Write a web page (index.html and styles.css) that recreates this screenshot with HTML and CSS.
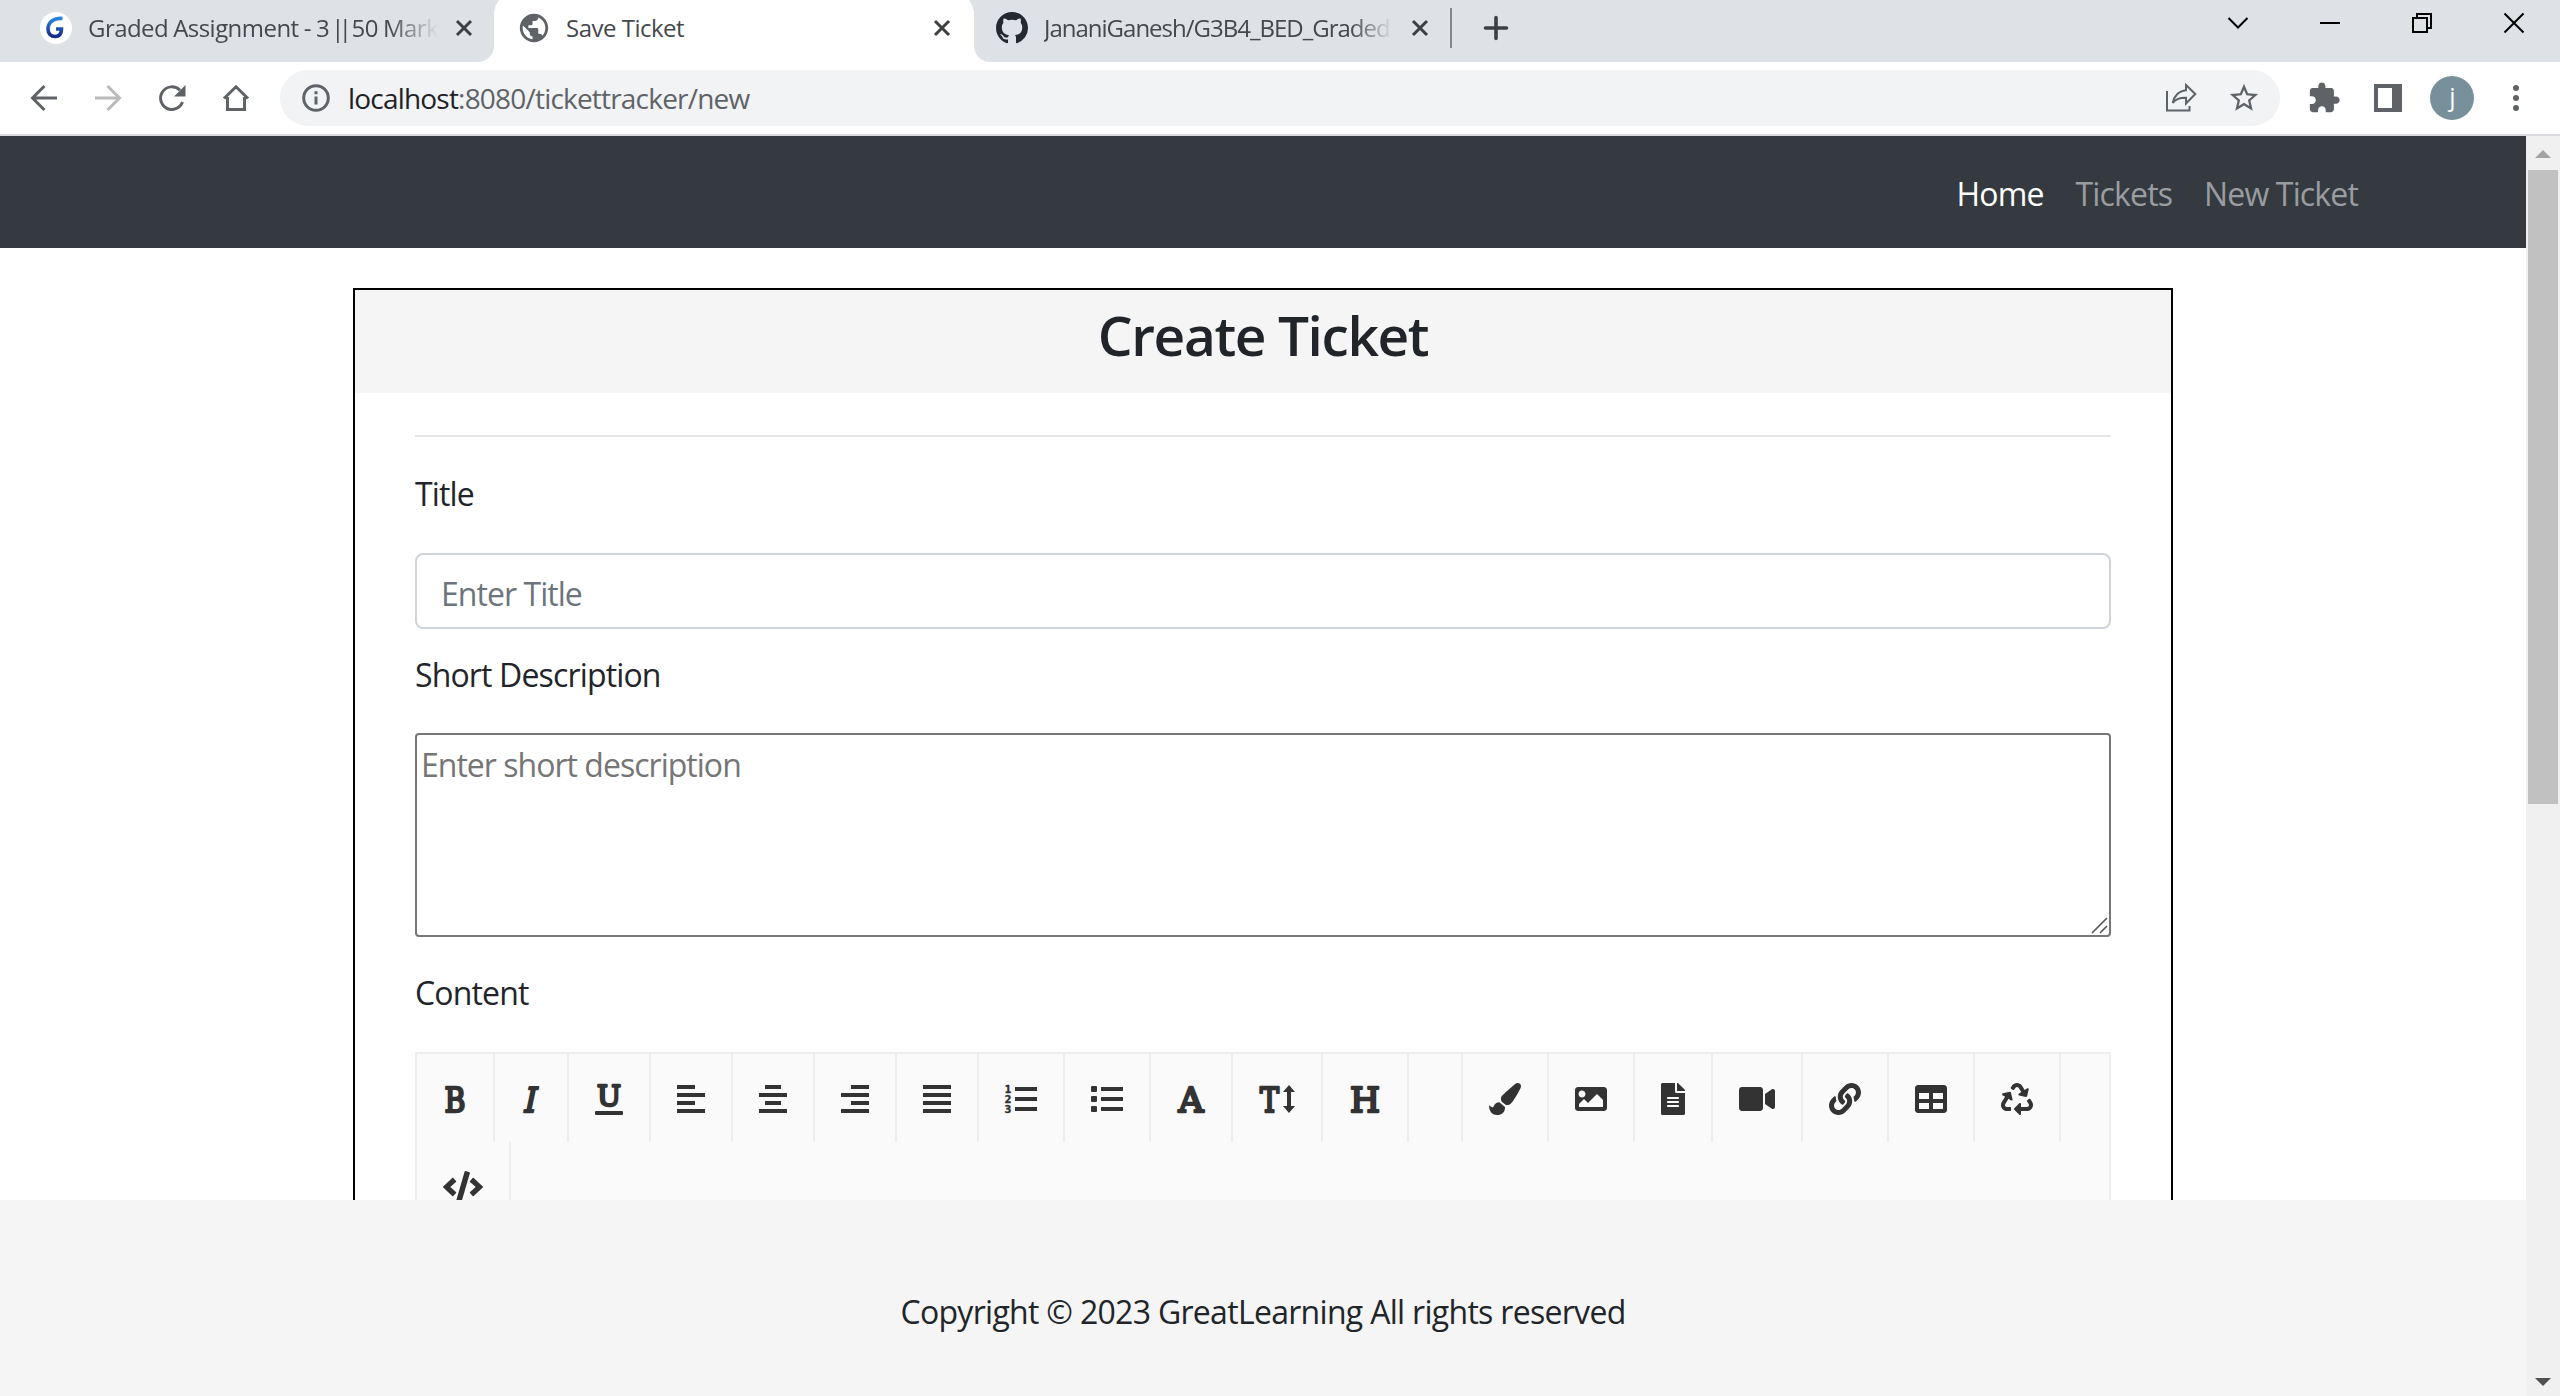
FILE: index.html
```html
<!DOCTYPE html>
<html lang="en">
<head>
<meta charset="utf-8">
<title>Save Ticket</title>
<link rel="stylesheet" href="styles.css">
</head>
<body>
<header class="tabs">
  <div class="tab tab-first">
    <svg class="fav-g" width="32" height="32" viewBox="0 0 32 32"><defs><linearGradient id="gl" x1="0" y1="0" x2="0" y2="1"><stop offset="0" stop-color="#2a86dc"/><stop offset="1" stop-color="#16298c"/></linearGradient></defs><circle cx="16" cy="16" r="16" fill="#fff"/><path d="M22.500 6.500C14 5.500 8 10 8 17c0 4.500 3 7.500 7 7.500 4.500 0 6.500-3 6.500-7.500H16" fill="none" stroke="url(#gl)" stroke-width="3.600"/></svg>
    <span class="tab-title t1">Graded Assignment - 3 <span class="bars">||</span> 50 Mark</span>
    <svg class="x" width="18" height="18" viewBox="0 0 18 18"><path d="M2 2l14 14M16 2L2 16"/></svg>
  </div>
  <div class="tab tab-active">
    <svg class="globe" width="34" height="34" viewBox="0 0 24 24"><path d="M12 2C6.480 2 2 6.480 2 12s4.480 10 10 10 10-4.480 10-10S17.520 2 12 2zm-1 17.930c-3.950-.49-7-3.850-7-7.930 0-.62.08-1.210.21-1.790L9 15v1c0 1.100.9 2 2 2v1.930zm6.900-2.540c-.26-.81-1-1.390-1.900-1.390h-1v-3c0-.55-.45-1-1-1H8v-2h2c.55 0 1-.45 1-1V7h2c1.100 0 2-.9 2-2v-.41c2.930 1.190 5 4.060 5 7.410 0 2.080-.8 3.970-2.100 5.390z"/></svg>
    <span class="tab-title t2">Save Ticket</span>
    <svg class="x" width="18" height="18" viewBox="0 0 18 18"><path d="M2 2l14 14M16 2L2 16"/></svg>
  </div>
  <div class="tab tab-last">
    <svg class="octo" width="32" height="32" viewBox="0 0 16 16"><path d="M8 0C3.580 0 0 3.580 0 8c0 3.540 2.290 6.530 5.470 7.590.4.07.55-.17.55-.38 0-.19-.01-.82-.01-1.490-2.010.37-2.530-.49-2.690-.94-.09-.23-.48-.94-.82-1.130-.28-.15-.68-.52-.01-.53.63-.01 1.080.58 1.230.82.72 1.210 1.870.87 2.330.66.07-.52.28-.87.51-1.070-1.780-.2-3.640-.89-3.640-3.950 0-.87.31-1.590.82-2.150-.08-.2-.36-1.020.08-2.120 0 0 .67-.21 2.200.82.64-.18 1.320-.27 2-.27s1.360.09 2 .27c1.530-1.040 2.200-.82 2.200-.82.44 1.100.16 1.920.08 2.120.51.56.82 1.270.82 2.150 0 3.070-1.870 3.750-3.650 3.950.29.25.54.73.54 1.480 0 1.070-.01 1.930-.01 2.200 0 .21.15.46.55.38A8.010 8.010 0 0 0 16 8c0-4.420-3.580-8-8-8z"/></svg>
    <span class="tab-title t3">JananiGanesh/G3B4_BED_Graded</span>
    <svg class="x" width="18" height="18" viewBox="0 0 18 18"><path d="M2 2l14 14M16 2L2 16"/></svg>
    <i class="tab-sep"></i>
    <svg class="plus" width="24" height="24" viewBox="0 0 24 24"><path d="M12 1.500v21M1.500 12h21"/></svg>
    <div class="win">
      <svg width="20" height="20" viewBox="0 0 20 20"><path d="M.5 5l9.500 9.500L19.500 5"/></svg>
      <svg width="20" height="20" viewBox="0 0 20 20"><path d="M0 10h20"/></svg>
      <svg width="20" height="20" viewBox="0 0 20 20"><path d="M1 5h14v14H1zM5 5V1h14v14h-4"/></svg>
      <svg width="20" height="20" viewBox="0 0 20 20"><path d="M.5.5l19 19M19.500.5l-19 19"/></svg>
    </div>
  </div>
</header>
<div class="toolbar">
  <div class="nav-icons">
    <svg width="28" height="28" viewBox="0 0 28 28"><path d="M27 14H3M14.500 2L2.500 14l12 12"/></svg>
    <svg class="off" width="28" height="28" viewBox="0 0 28 28"><path d="M1 14h24M13.500 2l12 12-12 12"/></svg>
    <svg width="28" height="28" viewBox="0 0 28 28"><path d="M24.500 18A11.300 11.300 0 1 1 22 6.300"/><path class="solid" d="M27.500 1v11.500H16z"/></svg>
    <svg width="28" height="28" viewBox="0 0 28 28"><path d="M5.500 13v12.500h17V13M2 14.500L14 2.800l12 11.700"/></svg>
  </div>
  <div class="omnibox">
    <svg class="info" width="28" height="28" viewBox="0 0 28 28"><circle cx="14" cy="14" r="12.300"/><path d="M14 12.500v8M14 7.300v3"/></svg>
    <span class="url"><b>localhost</b>:8080/tickettracker/new</span>
    <svg class="share" width="32" height="30" viewBox="0 0 32 30"><path d="M2 8v19.500h22.500V23"/><path d="M21 2l9.300 9L21 20.500v-5.800c-6.500-.2-10.500 1.300-13.300 5.300C8.800 13.500 13.500 8 21 7.300z"/></svg>
    <svg class="star" width="34" height="34" viewBox="0 0 24 24"><path d="M22 9.240l-7.190-.62L12 2 9.190 8.630 2 9.240l5.460 4.730L5.820 21 12 17.270 18.180 21l-1.630-7.030L22 9.240zM12 15.400l-3.760 2.270 1-4.280-3.320-2.880 4.380-.38L12 6.100l1.710 4.040 4.380.38-3.320 2.880 1 4.280L12 15.400z"/></svg>
  </div>
  <svg class="puzzle" width="34" height="34" viewBox="0 0 24 24"><path d="M20.500 11H19V7c0-1.100-.9-2-2-2h-4V3.500C13 2.120 11.880 1 10.500 1S8 2.120 8 3.500V5H4c-1.100 0-1.990.9-1.990 2v3.800H3.500c1.490 0 2.700 1.210 2.700 2.700s-1.210 2.700-2.700 2.700H2V20c0 1.100.9 2 2 2h3.800v-1.500c0-1.490 1.210-2.700 2.700-2.700 1.490 0 2.700 1.210 2.700 2.700V22H17c1.100 0 2-.9 2-2v-4h1.500c1.380 0 2.500-1.120 2.500-2.500S21.880 11 20.500 11z"/></svg>
  <i class="panel"></i>
  <span class="avatar">j</span>
  <svg class="dots" width="6" height="26" viewBox="0 0 6 26"><circle cx="3" cy="3" r="3"/><circle cx="3" cy="13" r="3"/><circle cx="3" cy="23" r="3"/></svg>
</div>
<div class="viewport">
  <div class="page">
    <nav class="navbar"><a class="current">Home</a><a>Tickets</a><a>New Ticket</a></nav>
    <main class="main">
      <section class="card">
        <h1 class="card-title">Create Ticket</h1>
        <form class="form">
          <hr class="rule">
          <label class="label">Title</label>
          <input class="field" placeholder="Enter Title">
          <label class="label label-2">Short Description</label>
          <div class="area-wrap"><textarea class="area" placeholder="Enter short description"></textarea><svg class="grip" width="17" height="17" viewBox="0 0 17 17"><path d="M1 16L16 1M9 16l7-7"/></svg></div>
          <label class="label label-3">Content</label>
          <div class="editor">
            <a><svg width="24" height="32"><text x="1.500" y="28.500" textLength="21" lengthAdjust="spacingAndGlyphs">B</text></svg></a>
            <a><svg width="20" height="32"><text transform="translate(1.500 28.500) skewX(-12)" textLength="12" lengthAdjust="spacingAndGlyphs">I</text></svg></a>
            <a><svg width="28" height="32"><text class="u" x="2" y="22.500" textLength="24" lengthAdjust="spacingAndGlyphs">U</text><rect y="28" width="28" height="4" rx="1"/></svg></a>
            <a><svg width="28" height="32"><path d="M0 2h18v4H0zM0 10h28v4H0zM0 18h18v4H0zM0 26h28v4H0z"/></svg></a>
            <a><svg width="28" height="32"><path d="M6 2h16v4H6zM0 10h28v4H0zM6 18h16v4H6zM0 26h28v4H0z"/></svg></a>
            <a><svg width="28" height="32"><path d="M10 2h18v4H10zM0 10h28v4H0zM10 18h18v4H10zM0 26h28v4H0z"/></svg></a>
            <a><svg width="28" height="32"><path d="M0 2h28v4H0zM0 10h28v4H0zM0 18h28v4H0zM0 26h28v4H0z"/></svg></a>
            <a><svg width="32" height="32"><path d="M10 4h22v4H10zM10 14h22v4H10zM10 24h22v4H10z"/><text class="num" x="-.5" y="10">1</text><text class="num" x="-.5" y="20">2</text><text class="num" x="-.5" y="30">3</text></svg></a>
            <a><svg width="32" height="32"><path d="M10 4h22v4H10zM10 14h22v4H10zM10 24h22v4H10z"/><rect y="3" width="6" height="6" rx="1"/><rect y="13" width="6" height="6" rx="1"/><rect y="23" width="6" height="6" rx="1"/></svg></a>
            <a><svg width="28" height="32"><text x="1.500" y="28.500" textLength="25" lengthAdjust="spacingAndGlyphs">A</text></svg></a>
            <a><svg width="36" height="32"><text x="1" y="28.500" textLength="19" lengthAdjust="spacingAndGlyphs">T</text><path d="M30 2l6 7h-4v14h4l-6 7-6-7h4V9h-4z"/></svg></a>
            <a><svg width="32" height="32"><text x="1" y="28.500" textLength="30" lengthAdjust="spacingAndGlyphs">H</text></svg></a>
            <a></a>
            <a><svg width="32" height="32" viewBox="0 0 512 512"><path d="M167.020 309.340c-40.120 2.580-76.530 17.860-97.190 72.300-2.350 6.210-8 9.980-14.590 9.980-11.110 0-45.460-27.670-55.250-34.350C0 439.620 37.930 512 128 512c75.860 0 128-43.770 128-120.190 0-3.110-.65-6.080-.97-9.130l-88.010-73.340zM457.890 0c-15.160 0-29.370 6.710-40.210 16.450C213.270 199.050 192 203.340 192 257.090c0 13.700 3.250 26.760 8.730 38.700l63.820 53.180c7.210 1.800 14.640 3.030 22.390 3.030 62.110 0 98.110-45.470 211.160-256.460 7.380-14.350 13.900-29.850 13.900-45.990C512 20.640 486 0 457.890 0z"/></svg></a>
            <a><svg width="32" height="32" viewBox="0 0 512 512"><path d="M464 448H48c-26.510 0-48-21.490-48-48V112c0-26.510 21.490-48 48-48h416c26.510 0 48 21.490 48 48v288c0 26.510-21.490 48-48 48zM112 120c-30.928 0-56 25.072-56 56s25.072 56 56 56 56-25.072 56-56-25.072-56-56-56zM64 384h384V272l-87.515-87.515c-4.686-4.686-12.284-4.686-16.971 0L208 320l-55.515-55.515c-4.686-4.686-12.284-4.686-16.971 0L64 336v48z"/></svg></a>
            <a><svg width="24" height="32" viewBox="0 0 384 512"><path d="M224 136V0H24C10.700 0 0 10.700 0 24v464c0 13.300 10.700 24 24 24h336c13.300 0 24-10.700 24-24V160H248c-13.200 0-24-10.800-24-24zm64 236c0 6.600-5.400 12-12 12H108c-6.600 0-12-5.400-12-12v-8c0-6.600 5.400-12 12-12h168c6.600 0 12 5.400 12 12v8zm0-64c0 6.600-5.400 12-12 12H108c-6.600 0-12-5.400-12-12v-8c0-6.600 5.400-12 12-12h168c6.600 0 12 5.400 12 12v8zm0-72v8c0 6.600-5.400 12-12 12H108c-6.600 0-12-5.400-12-12v-8c0-6.600 5.400-12 12-12h168c6.600 0 12 5.400 12 12zm96-114.100v6.100H256V0h6.100c6.400 0 12.500 2.500 17 7l97.900 98c4.500 4.500 7 10.600 7 16.900z"/></svg></a>
            <a><svg width="36" height="32" viewBox="0 0 576 512"><path d="M336.200 64H47.800C21.400 64 0 85.400 0 111.800v288.400C0 426.600 21.400 448 47.800 448h288.400c26.400 0 47.800-21.400 47.800-47.800V111.800c0-26.400-21.400-47.800-47.800-47.800zm189.400 37.700L416 177.300v157.400l109.600 75.500c21.200 14.600 50.400-.3 50.400-25.800V127.500c0-25.400-29.100-40.400-50.400-25.800z"/></svg></a>
            <a><svg width="32" height="32" viewBox="0 0 512 512"><path d="M326.612 185.391c59.747 59.809 58.927 155.698.36 214.590-.11.12-.24.25-.36.37l-67.200 67.200c-59.270 59.270-155.699 59.262-214.960 0-59.270-59.260-59.270-155.700 0-214.960l37.106-37.106c9.840-9.840 26.786-3.300 27.294 10.606.648 17.722 3.826 35.527 9.690 52.721 1.986 5.822.567 12.262-3.783 16.612l-13.087 13.087c-28.026 28.026-28.905 73.660-1.155 101.960 28.024 28.579 74.086 28.749 102.325.51l67.200-67.190c28.191-28.191 28.073-73.757 0-101.830-3.701-3.694-7.429-6.564-10.341-8.569a16.037 16.037 0 0 1-6.947-12.606c-.396-10.567 3.348-21.456 11.698-29.806l21.054-21.055c5.521-5.521 14.182-6.199 20.584-1.731a152.482 152.482 0 0 1 20.522 17.197zM467.547 44.449c-59.261-59.262-155.690-59.270-214.960 0l-67.200 67.200c-.12.12-.25.25-.36.37-58.566 58.892-59.387 154.781.36 214.590a152.454 152.454 0 0 0 20.521 17.196c6.402 4.468 15.064 3.789 20.584-1.731l21.054-21.055c8.350-8.350 12.094-19.239 11.698-29.806a16.037 16.037 0 0 0-6.947-12.606c-2.912-2.005-6.640-4.875-10.341-8.569-28.073-28.073-28.191-73.639 0-101.830l67.200-67.190c28.239-28.239 74.300-28.069 102.325.51 27.750 28.300 26.872 73.934-1.155 101.960l-13.087 13.087c-4.350 4.350-5.769 10.790-3.783 16.612 5.864 17.194 9.042 34.999 9.690 52.721.509 13.906 17.454 20.446 27.294 10.606l37.106-37.106c59.271-59.259 59.271-155.699.001-214.959z"/></svg></a>
            <a><svg width="32" height="32" viewBox="0 0 512 512"><path d="M464 32H48C21.490 32 0 53.490 0 80v352c0 26.510 21.490 48 48 48h416c26.510 0 48-21.490 48-48V80c0-26.510-21.490-48-48-48zM224 416H64v-96h160v96zm0-160H64v-96h160v96zm224 160H288v-96h160v96zm0-160H288v-96h160v96z"/></svg></a>
            <a><svg width="32" height="32" viewBox="0 0 512 512"><path d="M184.561 261.903c3.232 13.997-12.123 24.635-24.068 17.168l-40.736-25.455-50.867 81.402C55.606 356.273 70.960 384 96.012 384H148c6.627 0 12 5.373 12 12v40c0 6.627-5.373 12-12 12H96.115c-75.334 0-121.302-83.048-81.408-146.880l50.822-81.388-40.725-25.448c-12.081-7.547-8.966-25.961 4.879-29.158l110.237-25.450c8.611-1.988 17.201 3.381 19.189 11.990l25.452 110.237zm98.561-182.915l41.289 66.076-40.740 25.457c-12.051 7.528-9 25.953 4.879 29.158l110.237 25.450c8.672 1.999 17.215-3.438 19.189-11.990l25.450-110.237c3.197-13.844-11.990-24.719-24.068-17.168l-40.687 25.424-41.263-66.082c-37.521-60.033-125.209-60.171-162.816 0l-17.963 28.766c-3.510 5.620-1.800 13.021 3.820 16.533l33.919 21.195c5.620 3.512 13.024 1.803 16.536-3.817l17.961-28.743c12.712-20.341 41.973-19.676 54.257-.022zM497.288 301.120l-27.515-44.065c-3.511-5.623-10.916-7.334-16.538-3.821l-33.861 21.159c-5.620 3.512-7.330 10.915-3.818 16.536l27.564 44.112c13.257 21.211-2.057 48.960-27.136 48.960H320V336.020c0-14.213-17.242-21.383-27.313-11.313l-80 79.981c-6.249 6.248-6.249 16.379 0 22.627l80 79.989C302.689 517.308 320 510.300 320 495.989V448h95.880c75.274 0 121.335-82.997 81.408-146.880z"/></svg></a>
            <a><svg width="40" height="32" viewBox="0 0 640 512"><path d="M278.900 511.500l-61-17.700c-6.400-1.800-10-8.500-8.200-14.900L346.200 8.700c1.800-6.400 8.500-10 14.900-8.200l61 17.700c6.400 1.800 10 8.500 8.200 14.900L293.800 503.300c-1.900 6.400-8.500 10.100-14.900 8.200zm-114-112.200l43.500-46.400c4.600-4.900 4.300-12.700-.8-17.200L117 256l90.600-79.700c5.100-4.500 5.500-12.300.8-17.200l-43.500-46.400c-4.500-4.800-12.100-5.100-17-.5L3.800 247.200c-5.100 4.700-5.100 12.800 0 17.500l144.100 135.100c4.900 4.600 12.500 4.400 17-.5zm327.200.6l144.100-135.100c5.100-4.700 5.100-12.800 0-17.500L492.100 112.100c-4.800-4.500-12.400-4.300-17 .5L431.600 159c-4.600 4.900-4.300 12.700.8 17.200L523 256l-90.600 79.700c-5.100 4.500-5.500 12.300-.8 17.200l43.500 46.400c4.500 4.900 12.100 5.100 17 .6z"/></svg></a>
          </div>
        </form>
      </section>
    </main>
    <footer class="footer">Copyright © 2023 GreatLearning All rights reserved</footer>
  </div>
  <div class="scrollbar">
    <svg width="16" height="8" viewBox="0 0 16 8"><path fill="#a3a3a3" d="M8 0l8 8H0z"/></svg>
    <i class="thumb"></i>
    <svg class="down" width="16" height="8" viewBox="0 0 16 8"><path fill="#505050" d="M0 0h16L8 8z"/></svg>
  </div>
</div>
</body>
</html>
```
FILE: styles.css
```css
* { box-sizing: border-box; }
body { margin: 0; width: 2560px; height: 1396px; overflow: hidden; display: flex; flex-direction: column; background: #fff; font-family: "Open Sans", "Noto Sans", sans-serif; font-size: 32px; letter-spacing: -0.85px; color: #212529; }
svg { display: block; flex: none; overflow: visible; }

/* Tab strip */
.tabs { display: flex; height: 62px; background: linear-gradient(90deg, #fff 1000px, #dee1e6 1000px); }
.tab { display: flex; align-items: center; height: 62px; padding-bottom: 6px; background: #dee1e6; }
.tab-first { width: 494px; padding-left: 40px; border-bottom-right-radius: 16px; }
.tab-active { position: relative; width: 480px; padding-left: 23px; background: #fff; }
.tab-active::before, .tab-active::after { content: ""; position: absolute; top: 0; width: 5px; height: 12px; background: #dee1e6; }
.tab-active::before { left: 0; clip-path: polygon(0 0, 100% 0, 35% 45%, 0 100%); }
.tab-active::after { right: 0; clip-path: polygon(0 0, 100% 0, 100% 100%, 65% 45%); }
.tab-last { flex: 1; padding-left: 22px; border-bottom-left-radius: 16px; }
.tab-title { font-size: 24px; line-height: 36px; white-space: nowrap; color: #45484c; }
.t1 { width: 350px; margin-left: 16px; letter-spacing: -0.55px; word-spacing: -0.6px; -webkit-mask-image: linear-gradient(90deg, #000 86%, transparent); mask-image: linear-gradient(90deg, #000 86%, transparent); }
.bars { margin-left: -3px; letter-spacing: -5.5px; }
.t2 { width: 350px; margin-left: 15px; letter-spacing: -0.5px; }
.t3 { width: 349px; margin-left: 16px; letter-spacing: -1px; -webkit-mask-image: linear-gradient(90deg, #000 88%, transparent); mask-image: linear-gradient(90deg, #000 88%, transparent); }
.x { margin-left: 17px; fill: none; stroke: #3c4043; stroke-width: 3; }
.tab-last .x { margin-left: 18px; }
.globe { fill: #5f6368; }
.octo { fill: #24292f; }
.tab-sep { width: 2px; height: 40px; margin-left: 21px; background: #85888d; }
.plus { margin-left: 32px; fill: none; stroke: #3c4043; stroke-width: 3.6; stroke-linecap: round; }
.win { display: flex; gap: 72px; margin: -10px 36px 0 auto; }
.win svg { fill: none; stroke: #000; stroke-width: 2; }

/* Address bar */
.toolbar { display: flex; align-items: center; height: 74px; padding: 2px 0; border-bottom: 2px solid #dadce0; background: #fff; }
.nav-icons { display: flex; gap: 36px; width: 280px; padding-left: 30px; fill: none; stroke: #5f6368; stroke-width: 3; }
.nav-icons .off { stroke: #bababa; }
.nav-icons .solid { fill: #5f6368; stroke: none; }
.omnibox { display: flex; align-items: center; width: 2000px; height: 56px; padding-left: 22px; border-radius: 28px; background: #f1f3f4; }
.info { fill: none; stroke: #5f6368; stroke-width: 3; }
.url { margin-left: 18px; font-size: 28px; letter-spacing: -0.8px; color: #5f6368; white-space: nowrap; line-height: 40px; }
.url b { font-weight: 400; color: #202124; }
.share { margin-left: auto; fill: none; stroke: #5f6368; stroke-width: 2; }
.star { margin: 0 19px 0 30px; fill: #5f6368; }
.puzzle { margin-left: 27px; fill: #5f6368; }
.panel { width: 28px; height: 28px; margin-left: 33px; border: 4px solid #5f6368; border-right-width: 10px; }
.avatar { width: 44px; height: 44px; margin-left: 28px; border-radius: 50%; background: #78909c; color: #fff; font-size: 25px; line-height: 41px; text-align: center; }
.dots { margin-left: 39px; fill: #5f6368; }

/* Page */
.viewport { display: flex; height: 1260px; }
.page { display: flex; flex-direction: column; width: 2526px; }
.navbar { display: flex; justify-content: flex-end; align-items: center; height: 112px; padding: 2px 168px 0 0; gap: 32px; background: #343a40; color: #9a9da0; white-space: nowrap; }
.current { color: #fff; }
.main { height: 952px; padding: 40px 353px 0; overflow: hidden; }
.card { width: 1820px; height: 1300px; border: 2px solid #000; }
.card-title { height: 103px; margin: 0; padding-top: 11px; background: #f5f5f5; font-size: 55px; line-height: 67px; font-weight: 600; letter-spacing: -1.4px; text-align: center; }
.form { display: flex; flex-direction: column; padding: 0 60px; }
.rule { width: 100%; height: 2px; margin: 42px 0 33px; border: 0; background: #e5e5e5; }
.label { height: 48px; margin-bottom: 35px; line-height: 48px; white-space: nowrap; }
.field { height: 76px; padding: 5px 24px 0; border: 2px solid #ced4da; border-radius: 8px; font: inherit; letter-spacing: -0.95px; outline: 0; }
.field::placeholder { color: #6c757d; }
.label-2 { margin: 22px 0 34px; }
.area-wrap { position: relative; height: 204px; }
.area { display: block; width: 100%; height: 204px; padding: 6px 4px; border: 2px solid #767676; border-radius: 4px; resize: none; font: inherit; letter-spacing: -0.98px; line-height: 48px; outline: 0; }
.area::placeholder { color: #757575; }
.grip { position: absolute; right: 3px; bottom: 3px; stroke: #555; stroke-width: 1.6; }
.label-3 { margin-top: 32px; }

/* Editor toolbar */
.editor { display: flex; flex-wrap: wrap; align-content: flex-start; height: 400px; border: 2px solid #eee; background: #fafafa; fill: #333; }
.editor a { height: 88px; padding: 29px 26px 0; border-right: 2px solid #eee; }
.editor text { font: 34px "DejaVu Serif", serif; letter-spacing: 0; stroke: #333; stroke-width: 2.4; stroke-linejoin: round; }
.editor .u { font-size: 28px; }
.editor .num { font: bold 10px "DejaVu Sans", sans-serif; stroke-width: 0.3; }

.footer { height: 196px; padding-top: 88px; background: #f5f5f5; line-height: 48px; letter-spacing: -0.7px; text-align: center; white-space: nowrap; }
.scrollbar { display: flex; flex-direction: column; align-items: center; width: 34px; padding-top: 14px; background: #f0f0f0; }
.thumb { width: 30px; height: 634px; margin-top: 12px; background: #c1c1c1; }
.down { margin-top: 574px; }
```
